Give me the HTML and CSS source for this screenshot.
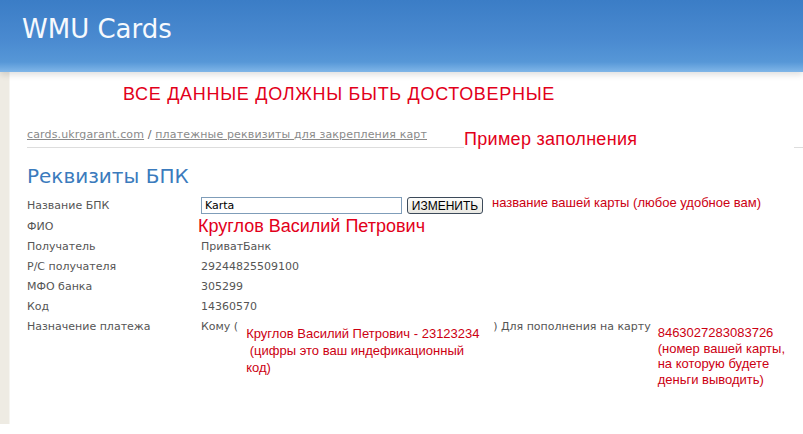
FILE: index.html
```html
<!DOCTYPE html>
<html>
<head>
    <title>WMU Cards</title>
    <link rel="stylesheet" href="styles.css">
</head>
<body>
    <div class="header">
        <div class="logo">WMU Cards</div>
    </div>

    <div class="page">
        <div class="strip"></div>
        <div class="content">
            <div class="warning">ВСЕ ДАННЫЕ ДОЛЖНЫ БЫТЬ ДОСТОВЕРНЫЕ</div>

            <div class="crumbs">
                <a href="#">cards.ukrgarant.com</a> / <a href="#">платежные реквизиты для закрепления карт</a>
            </div>
            <div class="sample">Пример заполнения</div>

            <h2>Реквизиты БПК</h2>

            <div class="rows">
                <div class="label">Название БПК</div>
                <div class="value name-row">
                    <input type="text" value="Karta">
                    <button>ИЗМЕНИТЬ</button>
                    <span class="note">название вашей карты (любое удобное вам)</span>
                </div>

                <div class="label">ФИО</div>
                <div class="value fio">Круглов Василий Петрович</div>

                <div class="label">Получатель</div>
                <div class="value">ПриватБанк</div>

                <div class="label">Р/С получателя</div>
                <div class="value">29244825509100</div>

                <div class="label">МФО банка</div>
                <div class="value">305299</div>

                <div class="label">Код</div>
                <div class="value">14360570</div>

                <div class="label top">Назначение платежа</div>
                <div class="value purpose">
                    <span>Кому (</span>
                    <span class="note who">Круглов Василий Петрович - 23123234<br>&nbsp;(цифры это ваш индефикационный<br>код)</span>
                    <span>) Для пополнения на карту</span>
                    <span class="note card">8463027283083726<br>(номер вашей карты,<br>на которую будете<br>деньги выводить)</span>
                </div>
            </div>
        </div>
    </div>
</body>
</html>
```

FILE: styles.css
```css
body {
    margin: 0;
    font-family: "DejaVu Sans", Verdana, sans-serif;
    font-size: 11px;
    color: #555;
    background: #fff;
}
.header {
    height: 58px;
    padding: 14px 0 0 22px;
    background: linear-gradient(#3b7dc6 0%, #4a8ad0 55%, #5697d7 86%, #80b6e8 100%);
    box-shadow: 0 3px 6px rgba(0,0,0,0.12);
    position: relative;
}
.logo {
    font-size: 26px;
    line-height: 30px;
    color: #f6f9fd;
}
.page {
    display: flex;
    height: 352px;
}
.strip {
    width: 9px;
    background: #eeebe3;
    border-right: 1px solid #f6f5f1;
}
.content {
    flex: 1;
    position: relative;
    padding: 0 0 0 17px;
}
.warning {
    margin: 11px 0 0 96px;
    font-family: "Liberation Sans", Arial, sans-serif;
    font-size: 18px;
    line-height: 22px;
    letter-spacing: 0.7px;
    color: #e2001a;
}
.crumbs {
    margin-top: 23px;
    padding-bottom: 5px;
    line-height: 14px;
    letter-spacing: 0.15px;
    border-bottom: 1px solid #ddd;
    color: #666;
}
.crumbs a {
    color: #8a8a8a;
}
.sample {
    position: absolute;
    left: 454px;
    top: 57px;
    width: 330px;
    height: 22px;
    background: #fff;
    font-family: "Liberation Sans", Arial, sans-serif;
    font-size: 18px;
    line-height: 20px;
    letter-spacing: 0.3px;
    color: #e2001a;
}
h2 {
    margin: 16px 0 0;
    font-size: 20px;
    line-height: 24px;
    font-weight: normal;
    color: #3b7bbd;
}
.rows {
    display: grid;
    grid-template-columns: 174px 1fr;
    grid-template-rows: 21px;
    grid-auto-rows: 20px;
    align-items: center;
    margin-top: 7px;
}
.label.top {
    align-self: start;
    line-height: 20px;
    margin-top: 1px;
}
.value {
    display: flex;
    align-items: center;
}
input {
    width: 201px;
    height: 17px;
    box-sizing: border-box;
    margin: 0;
    padding: 0 3px;
    border: 1px solid #7f9db9;
    font-family: "DejaVu Sans", Verdana, sans-serif;
    font-size: 11px;
    color: #000;
}
button {
    width: 76px;
    height: 17px;
    margin-left: 5px;
    padding: 0;
    border: 1px solid #3c4a5a;
    border-radius: 3px;
    background: linear-gradient(#fdfdfb, #e9e8e2);
    font-family: "Liberation Sans", Arial, sans-serif;
    font-size: 12px;
    color: #000;
}
.note {
    font-family: "Liberation Sans", Arial, sans-serif;
    font-size: 13px;
    line-height: 16px;
    color: #cc0012;
}
.name-row .note {
    margin: -6px 0 0 9px;
}
.fio {
    margin-left: -3px;
    font-family: "Liberation Sans", Arial, sans-serif;
    font-size: 18px;
    color: #e2001a;
}
.purpose {
    align-self: start;
    align-items: flex-start;
    line-height: 20px;
    margin-top: 1px;
}
.who {
    width: 247px;
    margin: 8px 0 0 8px;
    line-height: 17px;
    white-space: nowrap;
}
.card {
    margin: 8px 0 0 7px;
    line-height: 15.5px;
}
```
